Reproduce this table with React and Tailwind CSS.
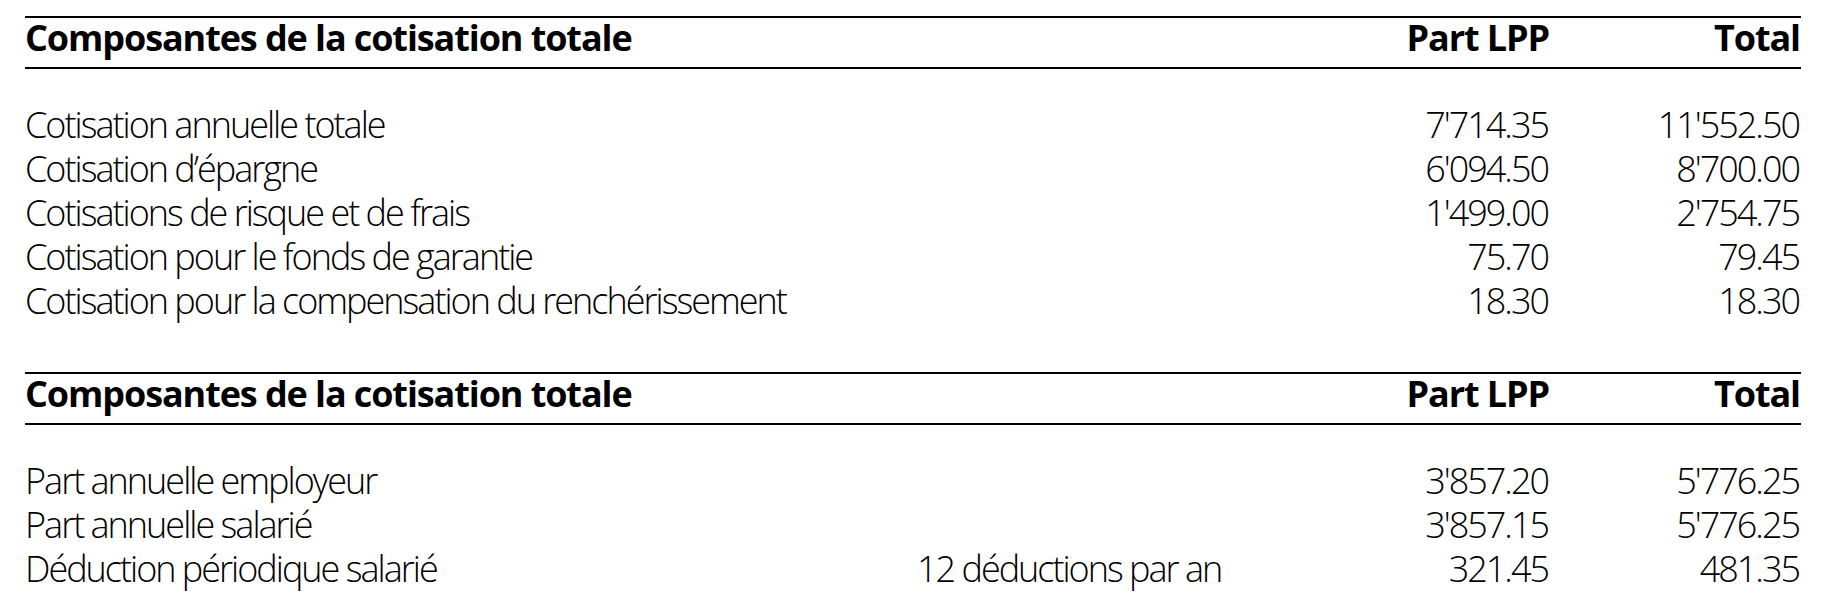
import React from "react";

const sections = [
  {
    title: "Composantes de la cotisation totale",
    rows: [
      ["Cotisation annuelle totale", "", "7'714.35", "11'552.50"],
      ["Cotisation d’épargne", "", "6'094.50", "8'700.00"],
      ["Cotisations de risque et de frais", "", "1'499.00", "2'754.75"],
      ["Cotisation pour le fonds de garantie", "", "75.70", "79.45"],
      ["Cotisation pour la compensation du renchérissement", "", "18.30", "18.30"],
    ],
  },
  {
    title: "Composantes de la cotisation totale",
    rows: [
      ["Part annuelle employeur", "", "3'857.20", "5'776.25"],
      ["Part annuelle salarié", "", "3'857.15", "5'776.25"],
      ["Déduction périodique salarié", "12 déductions par an", "321.45", "481.35"],
    ],
  },
];

const grid = "grid grid-cols-[892px_1fr_190px_251px]";

function Section({ title, rows }) {
  return (
    <div className="mb-[49px]">
      <div className={`${grid} border-y-2 border-black pt-[2px] pb-[11px] font-bold leading-[36px] tracking-[-1.1px]`}>
        <div>{title}</div>
        <div />
        <div className="pr-[1px] text-right">Part LPP</div>
        <div className="pr-[1px] text-right">Total</div>
      </div>
      <div className="pt-[34px] font-light leading-[44px] tracking-[-2px]">
        {rows.map(([label, note, lpp, total], i) => (
          <div key={i} className={grid}>
            <div>{label}</div>
            <div>{note}</div>
            <div className="pr-[2px] text-right">{lpp}</div>
            <div className="pr-[2px] text-right">{total}</div>
          </div>
        ))}
      </div>
    </div>
  );
}

export default function App() {
  return (
    <div className="min-h-screen bg-white px-[25px] pt-[16px] text-[36px] text-black [font-family:'Open_Sans',sans-serif]">
      {sections.map((s, i) => (
        <Section key={i} {...s} />
      ))}
    </div>
  );
}
